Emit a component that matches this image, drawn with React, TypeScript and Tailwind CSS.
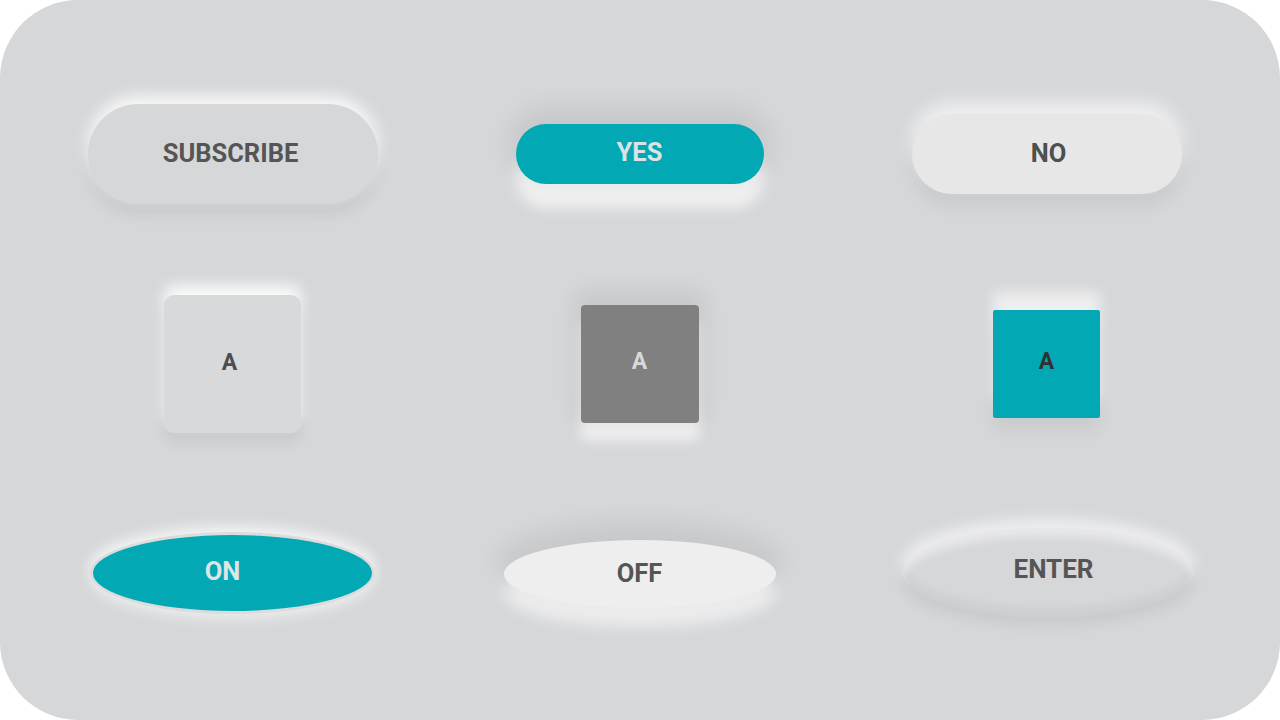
const font = "font-['Roboto','Liberation_Sans',sans-serif] font-bold";

export default function App() {
  return (
    <div className="w-[1280px] h-[720px] bg-white">
      <div
        className={`w-full h-full rounded-[78px] bg-[#d6d7d9] grid grid-cols-[407px_407px_407px] grid-rows-[209px_209px_209px] px-[29px] pt-[49px] ${font}`}
      >
        {/* row 1 */}
        <div className="flex items-center justify-center">
          <button className="w-[290px] h-[100px] rounded-full bg-[#d6d7d9] text-[25.5px] text-[#555555] pr-[4px] shadow-[0_-8px_16px_rgba(255,255,255,0.85),0_10px_16px_rgba(0,0,0,0.07)]">
            SUBSCRIBE
          </button>
        </div>
        <div className="flex items-center justify-center">
          <button className="w-[248px] h-[60px] rounded-full bg-[#02a9b4] text-[25.5px] text-[#dde3e4] pb-[3px] shadow-[0_-10px_26px_6px_rgba(0,0,0,0.08),0_24px_14px_rgba(255,255,255,0.65)]">
            YES
          </button>
        </div>
        <div className="flex items-center justify-center">
          <button className="w-[270px] h-[80px] rounded-full bg-[#e7e7e8] text-[25.5px] text-[#4f4f4f] pl-[4px] shadow-[0_-12px_18px_rgba(255,255,255,0.6),0_12px_18px_rgba(0,0,0,0.06)]">
            NO
          </button>
        </div>

        {/* row 2 */}
        <div className="flex items-center justify-center">
          <button className="w-[137px] h-[138px] mt-[2px] rounded-[10px] bg-[#d8d9db] text-[23px] text-[#4d4d4d] pr-[6px] shadow-[0_-10px_14px_rgba(255,255,255,0.85),0_10px_14px_rgba(0,0,0,0.06)]">
            A
          </button>
        </div>
        <div className="flex items-center justify-center">
          <button className="w-[118px] h-[118px] mt-[2px] rounded-[4px] bg-[#808080] text-[23px] text-[#d9d9d9] pb-[2px] shadow-[0_-8px_22px_6px_rgba(0,0,0,0.07),0_18px_12px_rgba(255,255,255,0.6)]">
            A
          </button>
        </div>
        <div className="flex items-center justify-center">
          <button className="w-[107px] h-[108px] mt-[2px] rounded-[2px] bg-[#02a9b4] text-[23px] text-[#2f3334] pb-[2px] shadow-[0_-18px_14px_rgba(255,255,255,0.6),0_14px_16px_rgba(0,0,0,0.05)]">
            A
          </button>
        </div>

        {/* row 3 */}
        <div className="flex items-center justify-center">
          <button className="w-[285px] h-[82px] mt-[2px] rounded-[50%] bg-[#02a9b4] border-[3px] border-[#dcdcdd] text-[25.5px] text-[#dfe4e5] pr-[20px] pb-[2px] shadow-[0_-6px_14px_rgba(255,255,255,0.7),0_6px_14px_rgba(255,255,255,0.45)]">
            ON
          </button>
        </div>
        <div className="flex items-center justify-center">
          <button className="w-[272px] h-[68px] mt-[4px] rounded-[50%] bg-[#eeeeef] text-[25.5px] text-[#555555] shadow-[0_-12px_24px_6px_rgba(0,0,0,0.07),0_18px_16px_rgba(255,255,255,0.6)]">
            OFF
          </button>
        </div>
        <div className="flex items-center justify-center">
          <button className="w-[292px] h-[88px] ml-[2px] rounded-[50%] bg-[#d6d7d9] text-[26px] text-[#555555] pl-[12px] pb-[4px] shadow-[0_-10px_14px_rgba(255,255,255,0.55),0_10px_14px_rgba(0,0,0,0.06),inset_0_8px_10px_rgba(255,255,255,0.45),inset_0_-8px_10px_rgba(0,0,0,0.04)]">
            ENTER
          </button>
        </div>
      </div>
    </div>
  );
}
